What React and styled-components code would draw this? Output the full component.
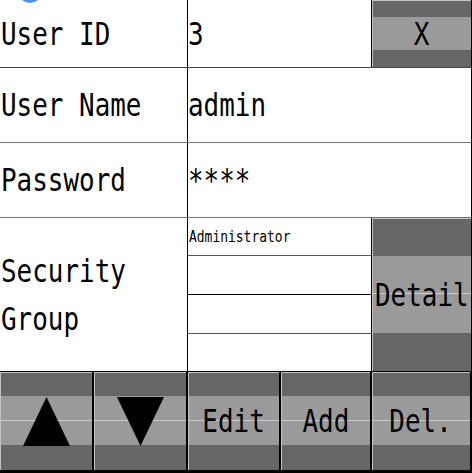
import React from "react";
import styled, { createGlobalStyle } from "styled-components";

const GlobalStyle = createGlobalStyle`
  html, body {
    margin: 0;
    padding: 0;
    background: #ffffff;
  }
  body {
    font-family: "DejaVu Sans Mono", "Liberation Mono", monospace;
    color: #000000;
    overflow: hidden;
  }
`;

const groups = [
  { name: "Administrator", height: 37, line: "#555555" },
  { name: "", height: 38, line: "#000000" },
  { name: "", height: 38, line: "#555555" },
  { name: "", height: 37, line: "transparent" },
];

const tools = [
  { key: "up", width: 94 },
  { key: "down", width: 94 },
  { key: "Edit", width: 93 },
  { key: "Add", width: 91 },
  { key: "Del.", width: 100 },
];

function Arrow({ down }) {
  return (
    <svg width="47" height="49" viewBox="0 0 47 49">
      {down ? (
        <polygon points="0,0 47,0 23.5,49" fill="#000000" />
      ) : (
        <polygon points="23.5,0 47,49 0,49" fill="#000000" />
      )}
    </svg>
  );
}

function App() {
  return (
    <>
      <GlobalStyle />
      <Panel>
        <StatusDot />
        <Row height={67} line="#444444">
          <LabelCell>
            <Text>User ID</Text>
          </LabelCell>
          <ValueCell>
            <Text>3</Text>
          </ValueCell>
          <SideButton>
            <Text center>X</Text>
          </SideButton>
        </Row>
        <Row height={74} line="#777777">
          <LabelCell>
            <Text>User Name</Text>
          </LabelCell>
          <ValueCell>
            <Text>admin</Text>
          </ValueCell>
        </Row>
        <Row height={74} line="#777777">
          <LabelCell>
            <Text>Password</Text>
          </LabelCell>
          <ValueCell>
            <Text>****</Text>
          </ValueCell>
        </Row>
        <Row height={153} line="#000000">
          <LabelCell>
            <Text>
              Security
              <br />
              Group
            </Text>
          </LabelCell>
          <GroupList>
            {groups.map((g, i) => (
              <GroupItem key={i} height={g.height} line={g.line}>
                <SmallText>{g.name}</SmallText>
              </GroupItem>
            ))}
          </GroupList>
          <SideButton>
            <Text center>Detail</Text>
          </SideButton>
        </Row>
        <ToolBar>
          {tools.map((t) => (
            <ToolButton key={t.key} width={t.width}>
              {t.key === "up" ? (
                <Arrow />
              ) : t.key === "down" ? (
                <Arrow down />
              ) : (
                <Text center>{t.key}</Text>
              )}
            </ToolButton>
          ))}
        </ToolBar>
      </Panel>
    </>
  );
}

const Panel = styled.div`
  position: relative;
  width: 472px;
  display: flex;
  flex-direction: column;
`;

const StatusDot = styled.div`
  position: absolute;
  top: -21px;
  left: 18px;
  width: 24px;
  height: 24px;
  border-radius: 50%;
  background: #4597ec;
`;

const Row = styled.div`
  display: flex;
  height: ${(p) => p.height}px;
  border-bottom: 1px solid ${(p) => p.line};
  border-right: 1px solid #000000;
`;

const LabelCell = styled.div`
  width: 188px;
  flex: none;
  display: flex;
  align-items: center;
  padding-left: 1px;
  box-sizing: border-box;
  border-right: 1px solid #000000;
  overflow: hidden;
`;

const ValueCell = styled.div`
  flex: 1;
  display: flex;
  align-items: center;
  padding-left: 0;
  overflow: hidden;
`;

const Text = styled.span`
  display: inline-block;
  font-size: 32px;
  line-height: 48px;
  white-space: nowrap;
  transform: scaleX(0.81);
  transform-origin: ${(p) => (p.center ? "center" : "left center")};
`;

const SmallText = styled.span`
  display: inline-block;
  font-size: 16px;
  line-height: 20px;
  white-space: nowrap;
  transform: scaleX(0.81);
  transform-origin: left center;
`;

const GroupList = styled.div`
  flex: 1;
  display: flex;
  flex-direction: column;
`;

const GroupItem = styled.div`
  height: ${(p) => p.height}px;
  border-bottom: 1px solid ${(p) => p.line};
  display: flex;
  align-items: center;
  padding-left: 1px;
  &:last-child {
    border-bottom: none;
  }
`;

const buttonFace = `
  background: linear-gradient(
    to bottom,
    #666666 0,
    #666666 25%,
    #9a9a9a 25%,
    #9a9a9a calc(50% - 1px),
    #cccccc calc(50% - 1px),
    #cccccc 50%,
    #9a9a9a 50%,
    #9a9a9a 75%,
    #666666 75%,
    #666666 100%
  );
  box-shadow: inset 1px 1px 0 #c4c4c4;
  display: flex;
  align-items: center;
  justify-content: center;
  overflow: hidden;
  box-sizing: border-box;
`;

const SideButton = styled.div`
  ${buttonFace}
  width: 100px;
  flex: none;
  border-left: 1px solid #000000;
`;

const ToolBar = styled.div`
  display: flex;
  height: 101px;
  border-bottom: 3px solid #000000;
  box-sizing: border-box;
`;

const ToolButton = styled.div`
  ${buttonFace}
  width: ${(p) => p.width}px;
  flex: none;
  border-right: 2px solid #000000;
`;

export default App;
